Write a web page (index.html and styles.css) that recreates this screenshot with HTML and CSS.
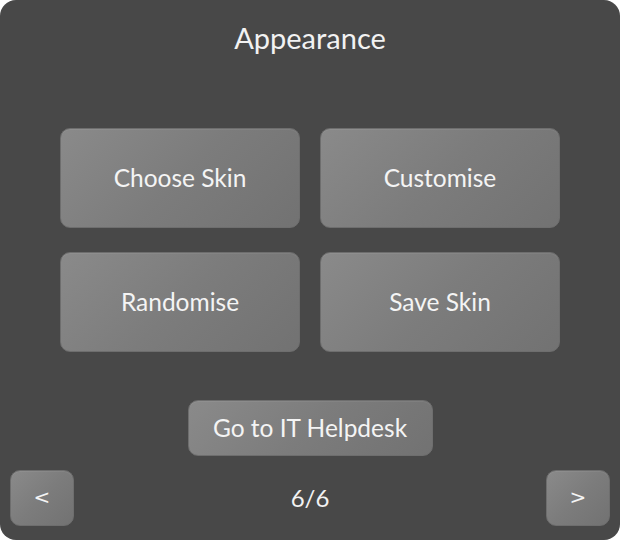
FILE: index.html
```html
<!DOCTYPE html>
<html>
<head>
<meta charset="utf-8">
<link rel="stylesheet" href="styles.css">
</head>
<body>
<div class="panel">
  <h1 class="title">Appearance</h1>
  <div class="grid">
    <button class="btn big">Choose Skin</button>
    <button class="btn big">Customise</button>
    <button class="btn big">Randomise</button>
    <button class="btn big">Save Skin</button>
  </div>
  <button class="btn help">Go to IT Helpdesk</button>
  <div class="nav">
    <button class="btn arrow">&lt;</button>
    <span class="page">6/6</span>
    <button class="btn arrow">&gt;</button>
  </div>
</div>
</body>
</html>
```
FILE: styles.css
```css
html, body { margin: 0; padding: 0; background: #ffffff; }
.panel {
  width: 620px; height: 540px; box-sizing: border-box;
  background: #484848; border-radius: 16px;
  display: flex; flex-direction: column; align-items: center;
  font-family: Lato, "Noto Sans", sans-serif; color: #f2f2f2;
}
.title {
  margin: 21px 0 0; font-weight: 400; font-size: 29px; line-height: 34px;
  height: 34px;
}
.grid {
  margin-top: 73px;
  display: grid; grid-template-columns: 240px 240px; grid-auto-rows: 100px;
  gap: 24px 20px;
}
.btn {
  font-family: inherit; color: #f4f4f4; font-weight: 400;
  background: linear-gradient(135deg, #8a8a8a 0%, #7c7c7c 50%, #727272 100%);
  border: 1px solid #6e6e6e; border-radius: 10px; padding: 0;
  box-shadow: inset 0 1px 0 rgba(255,255,255,0.06);
}
.big { font-size: 24.5px; padding-bottom: 2px; }
.help {
  margin-top: 48px; width: 245px; height: 56px; font-size: 24.5px; padding-bottom: 2px;
}
.nav {
  margin-top: 14px; width: 600px;
  display: flex; justify-content: space-between; align-items: center;
}
.arrow { width: 64px; height: 56px; font-size: 20px; font-family: "DejaVu Sans", sans-serif; padding-bottom: 2px; }
.page { font-size: 24px; padding-bottom: 2px; }
```
